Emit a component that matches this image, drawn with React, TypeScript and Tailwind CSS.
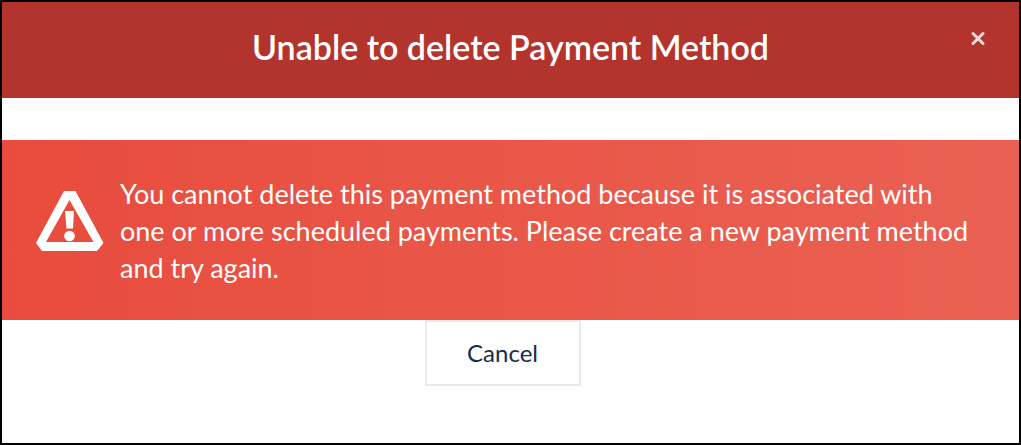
export default function App() {
  return (
    <div className="min-h-screen border-2 border-black bg-white font-['Lato',sans-serif]" role="dialog" aria-labelledby="title">
      <header className="grid h-24 grid-cols-[1fr_auto_1fr] items-start bg-[#b3342d] text-white">
        <h1 id="title" className="col-start-2 pt-6 text-[34px] leading-[42px] font-semibold">Unable to delete Payment Method</h1>
        <button type="button" aria-label="Close" className="mt-7 mr-8 justify-self-end">
          <svg className="size-[18px]" viewBox="0 0 18 18" fill="none" stroke="#f3dbdf" strokeWidth="3" strokeLinecap="round"><path d="M4 3.5L14 13.5M14 3.5L4 13.5" /></svg>
        </button>
      </header>
      <main className="pt-[42px]">
        <div role="alert" className="flex items-start gap-4 bg-linear-to-r from-[#e84c3d] to-[#ea6153] pt-[35px] pr-8 pb-[34px] pl-[34px] text-white">
          <svg className="mt-4 w-[68px] shrink-0" viewBox="0 0 68 60">
            <path fill="currentColor" fillRule="evenodd" d="M28 0H39.5L67.5 52L61 60H6L0 52ZM33.5 9L10 51H57.5Z" />
            <path fill="currentColor" d="M29 20H38L37 37.5H30.5Z" />
            <circle cx="33.5" cy="45" r="5.3" fill="currentColor" />
          </svg>
          <p className="text-[27px] leading-[37px]">
            You cannot delete this payment method because it is associated with<br />
            one or more scheduled payments. Please create a new payment method<br />
            and try again.
          </p>
        </div>
        <div className="flex justify-center pr-4">
          <button type="button" className="h-[66px] w-[156px] border-2 border-[#e6eaed] text-2xl text-[#162d4c]">Cancel</button>
        </div>
      </main>
    </div>
  );
}
